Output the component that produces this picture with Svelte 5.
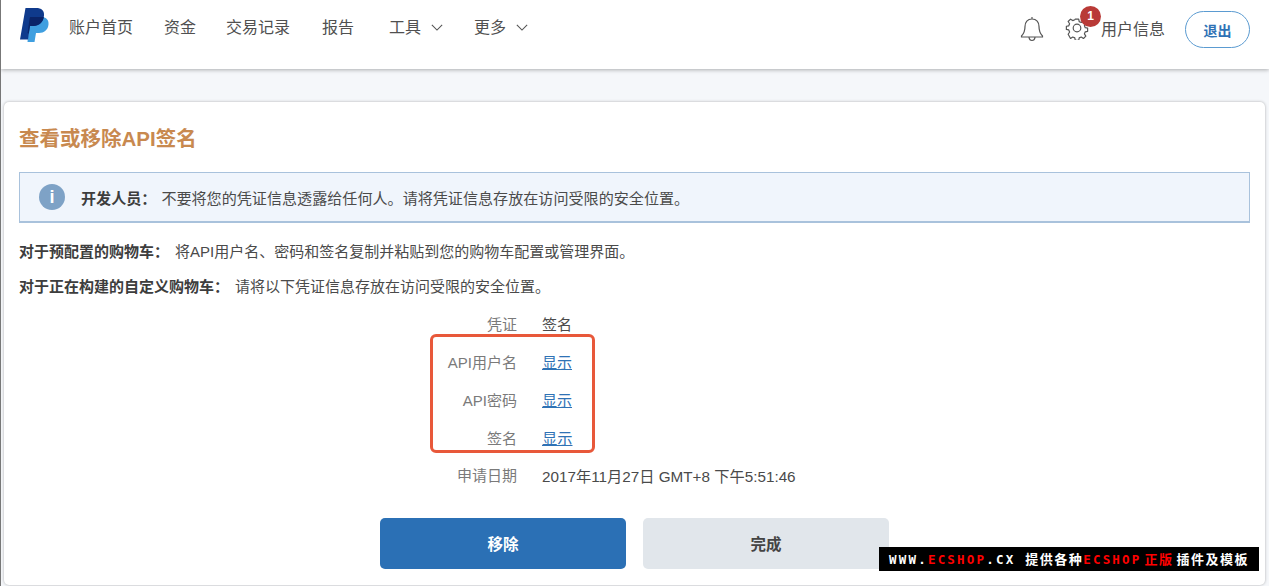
<script>
  const nav = [
    { label: '账户首页' }, { label: '资金' }, { label: '交易记录' }, { label: '报告' },
    { label: '工具', caret: true }, { label: '更多', caret: true }
  ];
  const rows = [
    ['凭证', '签名', false], ['API用户名', '显示', true], ['API密码', '显示', true],
    ['签名', '显示', true], ['申请日期', '2017年11月27日 GMT+8 下午5:51:46', false]
  ];
</script>

<div class="page">
  <header class="top">
    <svg class="logo" viewBox="0 0 30 34" width="30" height="34" aria-hidden="true">
      <path fill="#3f9fe0" d="M10 9h11c5 0 8 2.500 7.500 7.500C28 22 24 25 19 25h-3l-1.500 9H7.500Z"/>
      <path fill="#0f3a8c" d="M5.500 0H16c5.500 0 8.500 2.500 8 7.500C23.500 14 19 18 13.500 18H10L8 31.500H0Z"/>
      <path fill="#0a2468" d="M10 9h13.800C23 14.500 18.500 18 13.500 18H10L8.700 25.500 7.600 25 9.500 11Z"/>
    </svg>
    <nav class="nav">
      {#each nav as item}
        <span class="nav-item">{item.label}{#if item.caret}<svg class="caret" viewBox="0 0 14 8" width="12" height="7" aria-hidden="true"><path d="M1 1l6 6 6-6" fill="none" stroke="#555" stroke-width="1.300"/></svg>{/if}</span>
      {/each}
    </nav>
    <div class="tools">
      <svg class="bell" viewBox="0 0 24 26" width="24" height="26" aria-hidden="true">
        <path d="M12 3c-4.500 0-7 3.200-7 7.500 0 4.500-1 7-3.500 9.500v1h21v-1C20 17.500 19 15 19 10.500 19 6.200 16.500 3 12 3ZM12 3V1M9 21.500c.3 2 1.400 3 3 3s2.700-1 3-3" fill="none" stroke="#555" stroke-width="1.200"/>
      </svg>
      <span class="gear-wrap">
        <svg viewBox="0 0 24 24" width="24" height="24" aria-hidden="true">
          <circle cx="12" cy="12" r="3.800" fill="none" stroke="#555" stroke-width="1.200"/>
          <path d="M10 1.500h4l.6 3 2.400 1 2.600-1.700 2.800 2.800-1.700 2.600 1 2.400 2.800.5v3.800l-2.800.6-1 2.400 1.700 2.600-2.800 2.800-2.600-1.700-2.400 1-.6 2.900h-4l-.6-2.900-2.400-1-2.600 1.700L1.600 19.300l1.700-2.600-1-2.400-2.800-.6v-3.800l2.800-.5 1-2.400L1.600 4.400l2.800-2.800 2.600 1.700 2.400-1Z" transform="translate(1.800 1.800) scale(.85)" fill="none" stroke="#555" stroke-width="1.400" stroke-linejoin="round"/>
        </svg>
        <span class="badge">1</span>
      </span>
      <span class="user">用户信息</span>
      <button class="logout">退出</button>
    </div>
  </header>

  <main class="card">
    <h1>查看或移除API签名</h1>
    <div class="notice">
      <span class="info">i</span>
      <p><b>开发人员：</b>不要将您的凭证信息透露给任何人。请将凭证信息存放在访问受限的安全位置。</p>
    </div>
    <p class="line first"><b>对于预配置的购物车：</b>将API用户名、密码和签名复制并粘贴到您的购物车配置或管理界面。</p>
    <p class="line"><b>对于正在构建的自定义购物车：</b>请将以下凭证信息存放在访问受限的安全位置。</p>

    <div class="details">
      {#each rows as [k, v, link]}
        <span class="key">{k}</span>
        {#if link}<a href="#top" class="val link">{v}</a>{:else}<span class="val">{v}</span>{/if}
      {/each}
      <div class="highlight"></div>
    </div>

    <div class="actions">
      <button class="btn primary">移除</button>
      <button class="btn secondary">完成</button>
    </div>
  </main>

  <div class="mark">WWW.<em>ECSHOP</em>.CX <span class="cjk">提供各种</span><em>ECSHOP</em><em class="cjk brand">正版</em><span class="cjk">插件及模板</span></div>
</div>

<style>
  :global(body) { margin: 0; }
  .page {
    position: relative; width: 1269px; height: 586px; overflow: hidden; box-sizing: border-box;
    background: #f5f7fa; border-left: 1px solid #777;
    font-family: "Liberation Sans", "Noto Sans CJK SC", sans-serif; color: #4a4a4a;
  }
  .top {
    display: flex; align-items: center; height: 69px; padding: 0 19px 18px 19px; box-sizing: border-box;
    background: #fff; box-shadow: 0 1px 4px rgba(0,0,0,.3);
  }
  .logo { flex: none; margin-top: -2px; }
  .nav { display: flex; gap: 31px; margin-left: 19px; font-size: 16px; }
  .nav-item { display: flex; align-items: center; gap: 10px; color: #505050; }
  .nav-item:nth-child(3) { margin-left: -1px; }
  .nav-item:nth-child(4) { margin-left: 1px; }
  .nav-item:nth-child(5) { margin-left: 4px; }
  .caret { margin-top: 4px; }
  .tools { display: flex; align-items: center; margin-left: auto; margin-top: 4px; font-size: 16px; }
  .bell { margin-top: 3px; }
  .gear-wrap { position: relative; display: flex; margin-left: 21px; margin-top: 1px; }
  .badge {
    position: absolute; left: 15px; top: -10px; width: 21px; height: 21px; border-radius: 50%;
    background: #b93a37; color: #fff; font-size: 12px; font-weight: 700; text-align: center; line-height: 20px;
  }
  .user { margin-left: 12px; color: #505050; }
  .logout {
    width: 65px; height: 37px; margin-left: 20px; border: 1.500px solid #5b9bd1; border-radius: 19px; background: #fff;
    color: #2f72b5; font: 700 14px "Liberation Sans", "Noto Sans CJK SC", sans-serif; padding: 0; margin-top: 4px;
  }
  .card {
    position: relative; box-sizing: border-box; height: 483px; margin: 33px 4px 0 3px; padding: 22px 15px 0 15px;
    background: #fff; border-radius: 5px; box-shadow: 0 0 3px rgba(0,0,0,.3);
  }
  h1 { margin: 0; font-size: 20.500px; line-height: 30px; font-weight: 700; color: #c8894f; }
  .notice {
    display: flex; align-items: center; height: 51px; margin-top: 18px; box-sizing: border-box; padding-left: 19px;
    background: #f0f5fc; border: 1px solid #a9c2dc; border-bottom-width: 2px;
  }
  .info {
    flex: none; width: 26px; height: 26px; border-radius: 50%; background: #7ea2c6; color: #fff;
    font: 700 18px/26px "Liberation Sans", sans-serif; text-align: center;
  }
  .notice p { margin: 0 0 0 16px; font-size: 15.080px; }
  p { font-size: 15px; }
  p b { font-weight: 700; color: #3d3d3d; margin-right: 5px; }
  .line { margin: 17px 0 0; line-height: 18px; color: #4a4a4a; }
  .line.first { margin-top: 20px; }
  .line b { margin-right: 6px; }
  .details {
    position: relative; display: grid; grid-template-columns: 498px auto; column-gap: 25px; justify-content: start;
    grid-auto-rows: 37.750px; align-items: center; margin-top: 9px; font-size: 15px; 
  }
  .key { text-align: right; color: #7a7a7a; }
  .val { color: #4a4a4a; }
  .val:last-of-type { font-size: 15.250px; }
  .link { color: #2f72b5; text-decoration: underline; }
  .highlight {
    position: absolute; left: 411px; top: 29px; width: 165px; height: 119px; box-sizing: border-box;
    border: 3px solid #e8583a; border-radius: 6px;
  }
  .actions { display: flex; justify-content: center; gap: 17px; margin-top: 24px; }
  .btn {
    width: 246px; height: 51px; border: 0; border-radius: 5px; padding: 0;
    font: 700 15.500px "Liberation Sans", "Noto Sans CJK SC", sans-serif;
  }
  .primary { background: #2b70b5; color: #fff; }
  .secondary { background: #e1e6eb; color: #444; }
  .mark {
    position: absolute; left: 878px; top: 547px; width: 380px; height: 24px; box-sizing: border-box; padding-left: 10px;
    background: #000; color: #fff; font: 700 12.500px/24px "DejaVu Sans Mono", "Noto Sans CJK SC", monospace;
    letter-spacing: 2.200px; white-space: nowrap;
  }
  .mark em { color: #f00; font-style: normal; }
  .mark .cjk { font-size: 13px; letter-spacing: 1.500px; font-family: "Noto Sans CJK SC", sans-serif; }
  .mark .brand { margin: 0 3px; }
</style>
